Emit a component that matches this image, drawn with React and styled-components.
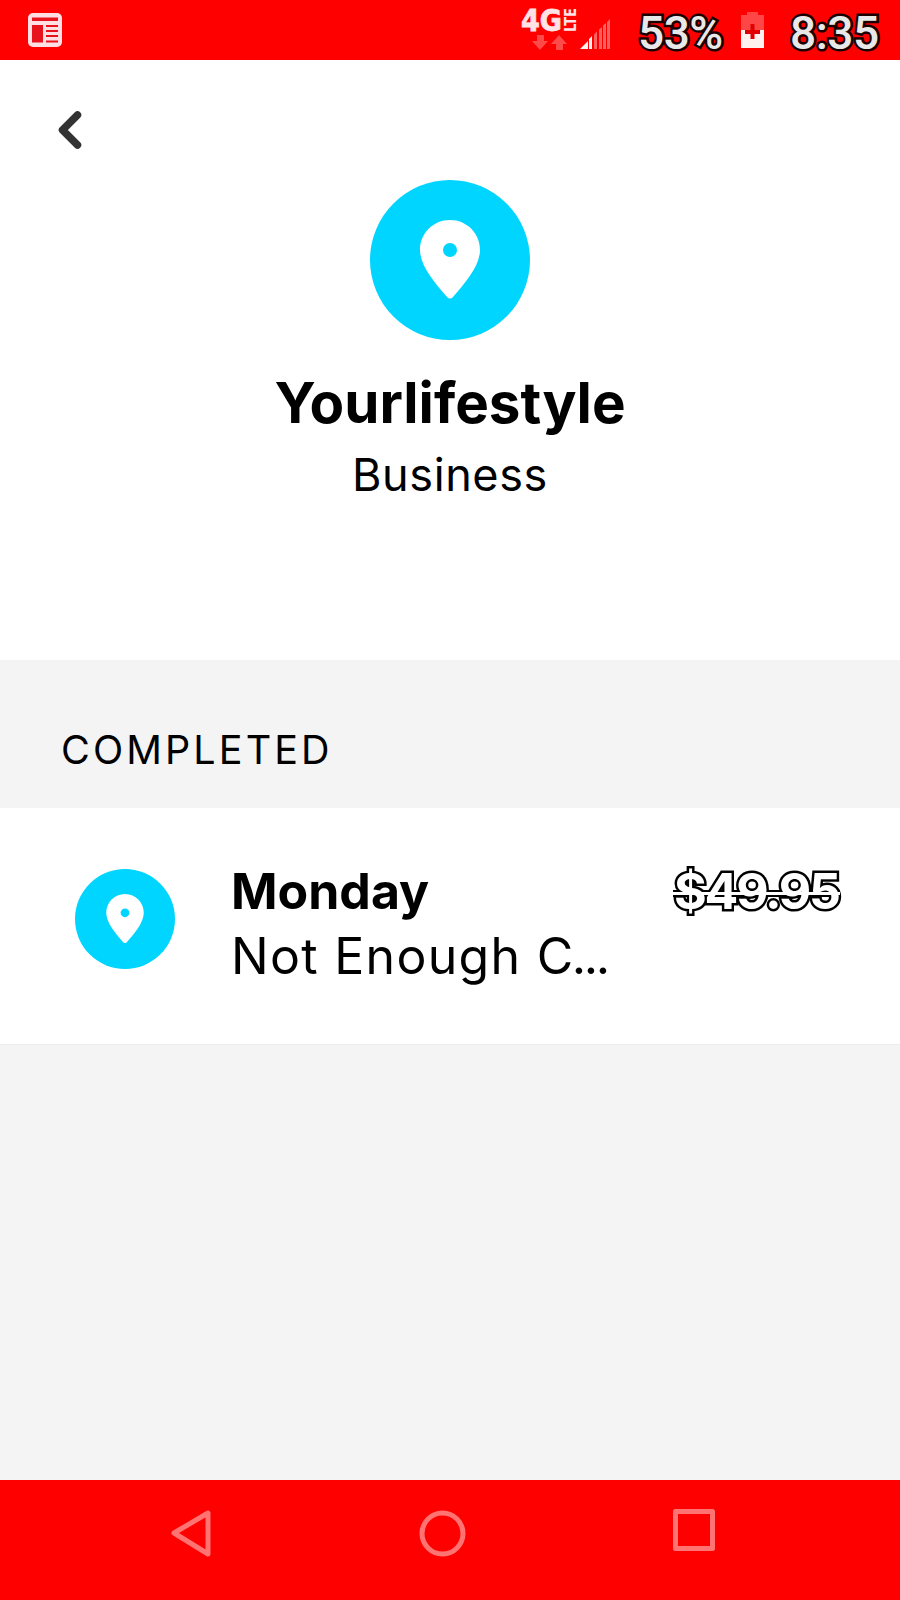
import React from 'react'
import styled, { createGlobalStyle } from 'styled-components'

const GlobalStyle = createGlobalStyle`
  * { box-sizing: border-box; }
  body { margin: 0; background: #f4f4f4; }
`

const Screen = styled.div`
  width: 900px;
  height: 1600px;
  display: flex;
  flex-direction: column;
  background: #f4f4f4;
  color: #000;
  font-family: Inter, sans-serif;
  overflow: hidden;
`

const StatusBar = styled.header`
  flex: none;
  height: 60px;
  display: flex;
  align-items: flex-start;
  background: #ff0000;
  padding-left: 28px;
`

const NewsIcon = styled.svg`
  flex: none;
  margin-top: 13px;
`

const NetworkIcon = styled.svg`
  flex: none;
  margin-left: 458px;
`

const StatusText = styled.span`
  flex: none;
  width: ${(props) => props.$width}px;
  margin-left: ${(props) => props.$gap}px;
  padding-top: 3px;
  font-family: Roboto, sans-serif;
  font-weight: 500;
  font-size: 46px;
  line-height: 60px;
  letter-spacing: -0.5px;
  white-space: nowrap;
  color: #e8e8e8;
  -webkit-text-stroke: 5px #1a0000;
  paint-order: stroke fill;
`

const BatteryIcon = styled.svg`
  flex: none;
  margin-left: 16px;
`

const Profile = styled.section`
  flex: none;
  height: 600px;
  display: flex;
  flex-direction: column;
  align-items: center;
  background: #fff;
`

const BackButton = styled.button`
  align-self: flex-start;
  height: 40px;
  margin: 50px 0 30px 57px;
  padding: 0;
  border: 0;
  background: none;
`

const Badge = styled.div`
  flex: none;
  width: ${(props) => props.$size}px;
  height: ${(props) => props.$size}px;
  border-radius: 50%;
  background: #00d5ff;
`

const Name = styled.h1`
  margin: 24px 0 0;
  font-weight: 700;
  font-size: 56.5px;
  line-height: 78px;
`

const Kind = styled.p`
  margin: 0;
  font-size: 45px;
  line-height: 66px;
  letter-spacing: 0.6px;
`

const SectionTitle = styled.h2`
  flex: none;
  height: 148px;
  margin: 0;
  padding: 63px 0 0 61px;
  font-weight: 400;
  font-size: 39.5px;
  line-height: 54px;
  letter-spacing: 3.1px;
`

const Row = styled.div`
  flex: none;
  height: 237px;
  display: flex;
  align-items: flex-start;
  padding: 61px 60px 0 75px;
  background: #fff;
  border-bottom: 1px solid #ececec;
`

const RowText = styled.div`
  flex: 1;
  margin-left: 56px;
`

const RowTitle = styled.div`
  margin-top: -14px;
  font-weight: 700;
  font-size: 50px;
  line-height: 72px;
`

const RowNote = styled.div`
  margin-top: -7px;
  font-size: 50px;
  line-height: 72px;
  letter-spacing: 1.3px;
  white-space: nowrap;
`

const Dots = styled.span`
  margin-left: -3px;
  letter-spacing: -2.4px;
`

const Price = styled.div`
  position: relative;
  z-index: 0;
  width: 166px;
  margin-top: -14px;
  font-weight: 700;
  font-size: 50px;
  line-height: 72px;
  letter-spacing: -2.2px;
  white-space: nowrap;
  color: #fff;
  -webkit-text-stroke: 5px #000;
  paint-order: stroke fill;

  /* outlined strike: black under the digits, white over them */
  &::before,
  &::after {
    content: '';
    position: absolute;
    left: -1px;
    right: 0;
  }
  &::before {
    z-index: -1;
    top: 35px;
    height: 7px;
    background: #000;
  }
  &::after {
    top: 37px;
    height: 3px;
    background: #fff;
  }
`

const Fill = styled.div`
  flex: 1;
`

const NavBar = styled.nav`
  flex: none;
  height: 120px;
  display: flex;
  justify-content: space-between;
  padding: 28px 183px 0 169px;
  background: #ff0000;
`

const NavIcon = styled.svg`
  width: 50px;
  height: 50px;
  fill: none;
  stroke: #ff7373;
  stroke-width: 5;
  stroke-linejoin: round;
`

const PinBadge = ({ size }) => (
  <Badge $size={size}>
    <svg width={size} height={size} viewBox="0 0 160 160">
      <path
        d="M80 40C63 40 50 53.500 50 70C50 86 65 103 77.500 117.500Q80 119.500 82.500 117.500C95 103 110 86 110 70C110 53.500 97 40 80 40Z"
        fill="#fff"
      />
      <circle cx="80" cy="70" r="7" fill="#00d5ff" />
    </svg>
  </Badge>
)

const App = () => (
  <>
    <GlobalStyle />
    <Screen>
      <StatusBar>
        <NewsIcon width="34" height="34" viewBox="0 0 34 34">
          <rect width="34" height="34" rx="5" fill="#ffdfe3" />
          <path d="M4 4.500h26v3.500H4zM4 12h11v17.500H4zM18 12h12v2H18zM18 17h12v2H18zM18 22h12v2H18zM18 27.500h12v2H18z" fill="#e8121c" />
        </NewsIcon>
        <NetworkIcon width="94" height="60" viewBox="520 0 94 60">
          <text x="521" y="31" fill="#ffe3e6" stroke="#ffe3e6" strokeWidth="0.8" fontFamily="DejaVu Sans" fontWeight="700" fontSize="30" textLength="41" lengthAdjust="spacingAndGlyphs">4G</text>
          <text transform="translate(576 32) rotate(-90)" fill="#ffe3e6" fontFamily="DejaVu Sans" fontWeight="700" fontSize="16" textLength="24" lengthAdjust="spacingAndGlyphs">LTE</text>
          <path d="M537 35h7v6h4l-8 9l-8-9h5zM556 50h7v-6h4l-8-9l-8 9h5z" fill="#ff4a4a" />
          <path d="M580 49L588 41V49ZM589 39L592 36V49H589Z" fill="#fff0f0" />
          <path d="M594 34.500L597 31.500V49H594ZM599 29.500L602 27V49H599ZM603 25.500L606 23V49H603ZM607 22L610 19V49H607Z" fill="#ff6060" />
        </NetworkIcon>
        <StatusText $width={86} $gap={24}>53%</StatusText>
        <BatteryIcon width="24" height="60" viewBox="740 0 24 60">
          <path d="M741 15h6v-3h11v3h6v15h-23z" fill="#ff4646" />
          <path d="M741 30h23v18h-23z" fill="#fff0f0" />
          <path d="M750.500 24h4v6h5.500v4h-5.500v5h-4v-5h-5.500v-4h5.500z" fill="#e00000" />
        </BatteryIcon>
        <StatusText $width={90} $gap={26}>8:35</StatusText>
      </StatusBar>

      <Profile>
        <BackButton aria-label="Back">
          <svg width="26" height="40" viewBox="0 0 26 40">
            <path d="M20.500 5L5.500 20L20.500 35" fill="none" stroke="#333" strokeWidth="7.500" strokeLinecap="round" strokeLinejoin="round" />
          </svg>
        </BackButton>
        <PinBadge size={160} />
        <Name>Yourlifestyle</Name>
        <Kind>Business</Kind>
      </Profile>

      <SectionTitle>COMPLETED</SectionTitle>
      <Row>
        <PinBadge size={100} />
        <RowText>
          <RowTitle>Monday</RowTitle>
          <RowNote>
            Not Enough C<Dots>...</Dots>
          </RowNote>
        </RowText>
        <Price>$49.95</Price>
      </Row>
      <Fill />

      <NavBar>
        <NavIcon viewBox="0 0 50 50">
          <path d="M39 5V46L5 25Z" />
        </NavIcon>
        <NavIcon viewBox="0 0 50 50">
          <circle cx="24.500" cy="25.500" r="20.500" />
        </NavIcon>
        <NavIcon viewBox="0 0 50 50">
          <rect x="8.500" y="3.500" width="37" height="37" />
        </NavIcon>
      </NavBar>
    </Screen>
  </>
)

export default App
